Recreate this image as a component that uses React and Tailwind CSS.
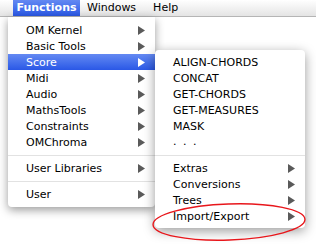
import React from 'react'

const Arrow = ({ white }) => (
  <svg width="7" height="9" viewBox="0 0 7 9" className="shrink-0">
    <polygon points="0,0 7,4.5 0,9" fill={white ? '#ffffff' : '#5a5a5a'} />
  </svg>
)

const Row = ({ label, arrow, active }) => (
  <div
    className={`h-[16px] flex items-center justify-between pl-[18px] pr-[10px] ${
      active ? 'bg-gradient-to-b from-[#6489f2] to-[#2a57e6] text-white' : 'text-black'
    }`}
  >
    <span className="leading-none">{label}</span>
    {arrow && <Arrow white={active} />}
  </div>
)

const Sep = () => (
  <div className="h-[10px] flex items-center">
    <div className="w-full h-px bg-[#e2e2e2]" />
  </div>
)

export default function App() {
  return (
    <div
      className="relative w-[316px] h-[252px] bg-white overflow-hidden text-[11px]"
      style={{ fontFamily: '"DejaVu Sans", sans-serif' }}
    >
      {/* menu bar */}
      <div className="h-[17px] flex items-stretch bg-gradient-to-b from-white to-[#e4e4e4] border-b border-[#b5b5b5] text-black">
        <div className="ml-[13px] w-[67px] flex items-center justify-center bg-gradient-to-b from-[#6489f2] to-[#2a57e6] text-white font-bold">
          Functions
        </div>
        <div className="ml-[7px] flex items-center">Windows</div>
        <div className="ml-[17px] flex items-center">Help</div>
      </div>

      {/* Functions menu */}
      <div className="absolute left-[8px] top-[17px] w-[147px] bg-white pt-[5px] pb-[5px] rounded-b-[4px] shadow-[0_3px_10px_rgba(0,0,0,0.4)]">
        <Row label="OM Kernel" arrow />
        <Row label="Basic Tools" arrow />
        <Row label="Score" arrow active />
        <Row label="Midi" arrow />
        <Row label="Audio" arrow />
        <Row label="MathsTools" arrow />
        <Row label="Constraints" arrow />
        <Row label="OMChroma" arrow />
        <Sep />
        <Row label="User Libraries" arrow />
        <Sep />
        <Row label="User" arrow />
      </div>

      {/* Score submenu */}
      <div className="absolute left-[155px] top-[50px] w-[150px] bg-white pt-[4px] pb-[4px] rounded-[4px] shadow-[0_3px_12px_rgba(0,0,0,0.4)]">
        <Row label="ALIGN-CHORDS" />
        <Row label="CONCAT" />
        <Row label="GET-CHORDS" />
        <Row label="GET-MEASURES" />
        <Row label="MASK" />
        <div className="h-[16px] flex items-center pl-[18px] tracking-[1.5px]">. . .</div>
        <Sep />
        <Row label="Extras" arrow />
        <Row label="Conversions" arrow />
        <Row label="Trees" arrow />
        <Row label="Import/Export" arrow />
      </div>

      {/* annotation */}
      <svg className="absolute left-[150px] top-[200px]" width="162" height="46" viewBox="0 0 162 46">
        <ellipse cx="79" cy="22" rx="76" ry="18" fill="none" stroke="#e8161b" strokeWidth="1.4" transform="rotate(-2 79 22)" />
      </svg>
    </div>
  )
}
